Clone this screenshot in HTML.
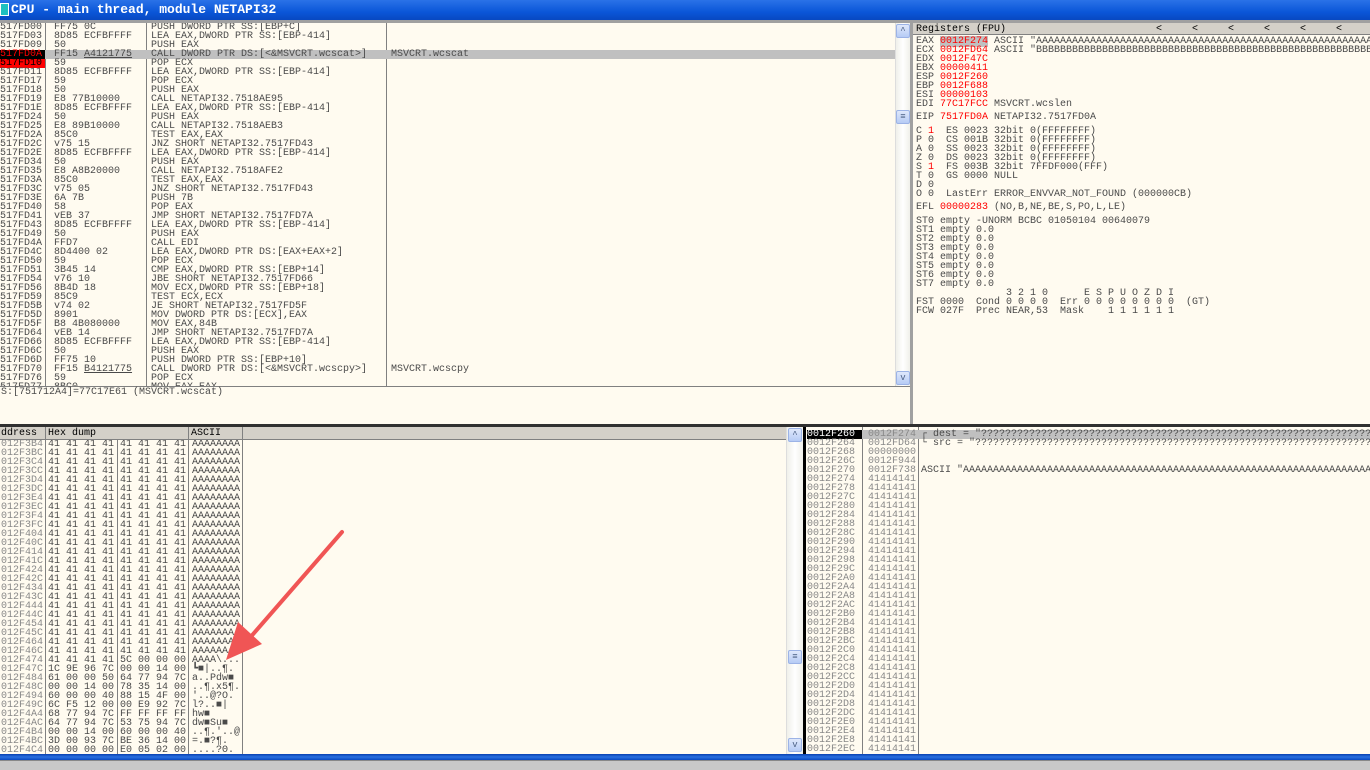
<!DOCTYPE html>
<html><head><meta charset="utf-8">
<style>
*{margin:0;padding:0;box-sizing:border-box}
html,body{overflow:hidden}
body{width:1370px;height:770px;background:#fffbf0;font-family:"Liberation Mono",monospace;font-size:10px;line-height:9px;color:#4a4a4a;position:relative}
.a{position:absolute;white-space:pre}
.r{position:absolute;left:0;right:0;height:9px}
.r span{position:absolute;white-space:pre;top:0}
.red{color:#f00}
.hl{background:#c0c0c0}
.vl{position:absolute;width:1px;background:#808080}
.sb{position:absolute;background:linear-gradient(90deg,#f0f0ea,#fff,#f0f0ea);border-left:1px solid #ddd}
.btn{position:absolute;width:14px;height:14px;background:linear-gradient(#dfe8fb,#b6cbf5);border:1px solid #9cb3e6;border-radius:2px;color:#4d6185;font-size:9px;text-align:center;line-height:12px}
.hdr{position:absolute;background:#d4d0c8;height:12px;border-bottom:1px solid #808080;color:#000;overflow:hidden}
.hdr span{position:absolute;top:2px;white-space:pre}
</style></head><body>
<div class="a" style="left:0;top:0;width:1370px;height:20px;background:linear-gradient(#2a72e8,#0a56d8 60%,#0848c0);"></div>
<div class="a" style="left:0;top:3px;width:9px;height:13px;background:#1ec0c0;border:1px solid #fff"></div>
<div class="a" style="left:11px;top:3px;color:#fff;font-weight:bold;font-size:13px;line-height:14px">CPU - main thread, module NETAPI32</div>
<div class="a" style="left:0;top:20px;width:1370px;height:3px;background:#a0a0a0"></div>

<div class="a" style="left:0;top:23px;width:895px;height:363px;overflow:hidden">
<div class="vl" style="left:45px;top:0;height:363px"></div>
<div class="vl" style="left:146px;top:0;height:363px"></div>
<div class="vl" style="left:386px;top:0;height:363px"></div>
<div id="dis"></div>
</div>
<div class="sb" style="left:895px;top:23px;width:15px;height:363px"></div>
<div class="btn" style="left:896px;top:24px">&#94;</div>
<div class="btn" style="left:896px;top:110px">&#8801;</div>
<div class="btn" style="left:896px;top:371px">v</div>
<div class="a" style="left:0;top:386px;width:910px;height:1px;background:#808080"></div>
<div class="a" style="left:1px;top:388px">S:[751712A4]=77C17E61 (MSVCRT.wcscat)</div>
<div class="a" style="left:910px;top:23px;width:3px;height:401px;background:#a0a0a0"></div>

<div class="hdr" style="left:913px;top:23px;width:457px"><span style="left:3px">Registers (FPU)</span><span style="left:243px">&lt;     &lt;     &lt;     &lt;     &lt;     &lt;     &lt;</span></div>
<div class="a" style="left:913px;top:36px;width:457px;height:388px;overflow:hidden">
<div class="a" style="left:3px;top:1px">EAX <span class="red hl">0012F274</span> ASCII "AAAAAAAAAAAAAAAAAAAAAAAAAAAAAAAAAAAAAAAAAAAAAAAAAAAAAAAAAAAAAAAAAAAA
ECX <span class="red">0012FD64</span> ASCII "BBBBBBBBBBBBBBBBBBBBBBBBBBBBBBBBBBBBBBBBBBBBBBBBBBBBBBBBBBBBBBBBBBBB
EDX <span class="red">0012F47C</span>
EBX <span class="red">00000411</span>
ESP <span class="red">0012F260</span>
EBP <span class="red">0012F688</span>
ESI <span class="red">00000103</span>
EDI <span class="red">77C17FCC</span> MSVCRT.wcslen</div>
<div class="a" style="left:3px;top:77px">EIP <span class="red">7517FD0A</span> NETAPI32.7517FD0A</div>
<div class="a" style="left:3px;top:91px">C <span class="red">1</span>  ES 0023 32bit 0(FFFFFFFF)
P 0  CS 001B 32bit 0(FFFFFFFF)
A 0  SS 0023 32bit 0(FFFFFFFF)
Z 0  DS 0023 32bit 0(FFFFFFFF)
S <span class="red">1</span>  FS 003B 32bit 7FFDF000(FFF)
T 0  GS 0000 NULL
D 0
O 0  LastErr ERROR_ENVVAR_NOT_FOUND (000000CB)</div>
<div class="a" style="left:3px;top:167px">EFL <span class="red">00000283</span> (NO,B,NE,BE,S,PO,L,LE)</div>
<div class="a" style="left:3px;top:181px">ST0 empty -UNORM BCBC 01050104 00640079
ST1 empty 0.0
ST2 empty 0.0
ST3 empty 0.0
ST4 empty 0.0
ST5 empty 0.0
ST6 empty 0.0
ST7 empty 0.0
               3 2 1 0      E S P U O Z D I
FST 0000  Cond 0 0 0 0  Err 0 0 0 0 0 0 0 0  (GT)
FCW 027F  Prec NEAR,53  Mask    1 1 1 1 1 1</div>
</div>

<div class="a" style="left:0;top:424px;width:1370px;height:3px;background:#303030"></div>

<div class="hdr" style="left:0;top:427px;width:786px;height:13px"><span style="left:1px">ddress</span><span style="left:48px">Hex dump</span><span style="left:191px">ASCII</span></div>
<div class="vl" style="left:45px;top:427px;height:327px"></div>
<div class="vl" style="left:117px;top:440px;height:314px"></div>
<div class="vl" style="left:188px;top:427px;height:327px"></div>
<div class="vl" style="left:242px;top:427px;height:327px"></div>
<div class="a" id="dump" style="left:0;top:440px;width:786px;height:314px;overflow:hidden"></div>
<div class="sb" style="left:786px;top:427px;width:17px;height:327px"></div>
<div class="btn" style="left:788px;top:428px">&#94;</div>
<div class="btn" style="left:788px;top:650px">&#8801;</div>
<div class="btn" style="left:788px;top:738px">v</div>
<div class="a" style="left:803px;top:427px;width:3px;height:327px;background:#000"></div>

<div class="vl" style="left:862px;top:427px;height:327px"></div>
<div class="vl" style="left:918px;top:427px;height:327px"></div>
<div class="a" id="stk" style="left:806px;top:427px;width:564px;height:327px;overflow:hidden"></div>

<div class="a" style="left:0;top:754px;width:1370px;height:6px;background:linear-gradient(#0840b0,#2a70e0,#0848c0)"></div>
<div class="a" style="left:0;top:760px;width:1370px;height:10px;background:#c8c8c8;border-top:1px solid #888"></div>

<svg class="a" style="left:0;top:0" width="1370" height="770">
<line x1="342" y1="532" x2="248" y2="640" stroke="#f05555" stroke-width="4" stroke-linecap="round"/>
<polygon points="226,660 238,622 262,644" fill="#f05555"/>
</svg>

<script>
var D=[["517FD00","FF75 0C","PUSH DWORD PTR SS:[EBP+C]",""],
["517FD03","8D85 ECFBFFFF","LEA EAX,DWORD PTR SS:[EBP-414]",""],
["517FD09","50","PUSH EAX",""],
["517FD0A","FF15 <u>A4121775</u>","CALL DWORD PTR DS:[&lt;&amp;MSVCRT.wcscat&gt;]","MSVCRT.wcscat"],
["517FD10","59","POP ECX",""],
["517FD11","8D85 ECFBFFFF","LEA EAX,DWORD PTR SS:[EBP-414]",""],
["517FD17","59","POP ECX",""],
["517FD18","50","PUSH EAX",""],
["517FD19","E8 77B10000","CALL NETAPI32.7518AE95",""],
["517FD1E","8D85 ECFBFFFF","LEA EAX,DWORD PTR SS:[EBP-414]",""],
["517FD24","50","PUSH EAX",""],
["517FD25","E8 89B10000","CALL NETAPI32.7518AEB3",""],
["517FD2A","85C0","TEST EAX,EAX",""],
["517FD2C","v75 15","JNZ SHORT NETAPI32.7517FD43",""],
["517FD2E","8D85 ECFBFFFF","LEA EAX,DWORD PTR SS:[EBP-414]",""],
["517FD34","50","PUSH EAX",""],
["517FD35","E8 A8B20000","CALL NETAPI32.7518AFE2",""],
["517FD3A","85C0","TEST EAX,EAX",""],
["517FD3C","v75 05","JNZ SHORT NETAPI32.7517FD43",""],
["517FD3E","6A 7B","PUSH 7B",""],
["517FD40","58","POP EAX",""],
["517FD41","vEB 37","JMP SHORT NETAPI32.7517FD7A",""],
["517FD43","8D85 ECFBFFFF","LEA EAX,DWORD PTR SS:[EBP-414]",""],
["517FD49","50","PUSH EAX",""],
["517FD4A","FFD7","CALL EDI",""],
["517FD4C","8D4400 02","LEA EAX,DWORD PTR DS:[EAX+EAX+2]",""],
["517FD50","59","POP ECX",""],
["517FD51","3B45 14","CMP EAX,DWORD PTR SS:[EBP+14]",""],
["517FD54","v76 10","JBE SHORT NETAPI32.7517FD66",""],
["517FD56","8B4D 18","MOV ECX,DWORD PTR SS:[EBP+18]",""],
["517FD59","85C9","TEST ECX,ECX",""],
["517FD5B","v74 02","JE SHORT NETAPI32.7517FD5F",""],
["517FD5D","8901","MOV DWORD PTR DS:[ECX],EAX",""],
["517FD5F","B8 4B080000","MOV EAX,84B",""],
["517FD64","vEB 14","JMP SHORT NETAPI32.7517FD7A",""],
["517FD66","8D85 ECFBFFFF","LEA EAX,DWORD PTR SS:[EBP-414]",""],
["517FD6C","50","PUSH EAX",""],
["517FD6D","FF75 10","PUSH DWORD PTR SS:[EBP+10]",""],
["517FD70","FF15 <u>B4121775</u>","CALL DWORD PTR DS:[&lt;&amp;MSVCRT.wcscpy&gt;]","MSVCRT.wcscpy"],
["517FD76","59","POP ECX",""],
["517FD77","8BC0","MOV EAX,EAX",""]];
var h="";D.forEach(function(d,i){var sel=i==3,bp=(i==3||i==4);
h+='<div class="r'+(sel?' hl':'')+'" style="top:'+(i*9)+'px'+(sel?';left:45px':'')+'">'+
'<span style="left:'+(sel?-45:0)+'px;'+(bp?'background:'+(i==3?'#000':'#f00')+';color:'+(i==3?'#f00':'#000')+';width:45px':'')+'">'+d[0]+'</span>'+
'<span style="left:'+(sel?9:54)+'px">'+d[1]+'</span><span style="left:'+(sel?106:151)+'px">'+d[2]+'</span><span style="left:'+(sel?346:391)+'px">'+d[3]+'</span></div>';});
document.getElementById('dis').innerHTML=h;
var X=[["41 41 41 41","5C 00 00 00","AAAA\\..."],["1C 9E 96 7C","00 00 14 00","\u2517\u25a0|..\u00b6."],["61 00 00 50","64 77 94 7C","a..Pdw\u25a0"],["00 00 14 00","78 35 14 00","..\u00b6.x5\u00b6."],["60 00 00 40","88 15 4F 00","'..@?O."],["6C F5 12 00","00 E9 92 7C","l?..\u25a0|"],["68 77 94 7C","FF FF FF FF","hw\u25a0"],["64 77 94 7C","53 75 94 7C","dw\u25a0Su\u25a0"],["00 00 14 00","60 00 00 40","..\u00b6.'..@"],["3D 00 93 7C","BE 36 14 00","=.\u25a0?\u00b6."],["00 00 00 00","E0 05 02 00","....?\u0398."]];
h="";for(var i=0;i<35;i++){var a=(0x12F3B4+i*8).toString(16).toUpperCase();var r=i<24?["41 41 41 41","41 41 41 41","AAAAAAAA"]:X[i-24];
h+='<div class="r" style="top:'+(i*9)+'px"><span style="left:1px;color:#888">0'+a+'</span><span style="left:48px">'+r[0]+'</span><span style="left:120px">'+r[1]+'</span><span style="left:192px">'+r[2]+'</span></div>';}
document.getElementById('dump').innerHTML=h;
var V=["0012F274","0012FD64","00000000","0012F944","0012F738"];
h="";for(var i=0;i<36;i++){var a=(0x12F260+i*4).toString(16).toUpperCase();var v=i<5?V[i]:"41414141";var c="";
if(i==0)c='\u250c dest = "????????????????????????????????????????????????????????????????????";';if(i==1)c='\u2514 src = "??????????????????????????????????????????????????????????????????????";';if(i==4)c='ASCII "AAAAAAAAAAAAAAAAAAAAAAAAAAAAAAAAAAAAAAAAAAAAAAAAAAAAAAAAAAAAAAAAAAAAAA';
h+='<div class="r'+(i==0?' hl':'')+'" style="top:'+(3+i*9)+'px'+(i==0?';left:56px':'')+'"><span style="left:'+(i==0?-55:1)+'px;'+(i==0?'background:#000;color:#fff;width:55px':'color:#888')+'">00'+a+'</span><span style="left:'+(i==0?6:62)+'px;color:#888">'+v+'</span><span style="left:'+(i==0?59:115)+'px">'+c+'</span></div>';}
document.getElementById('stk').innerHTML=h;
</script>
</body></html>
